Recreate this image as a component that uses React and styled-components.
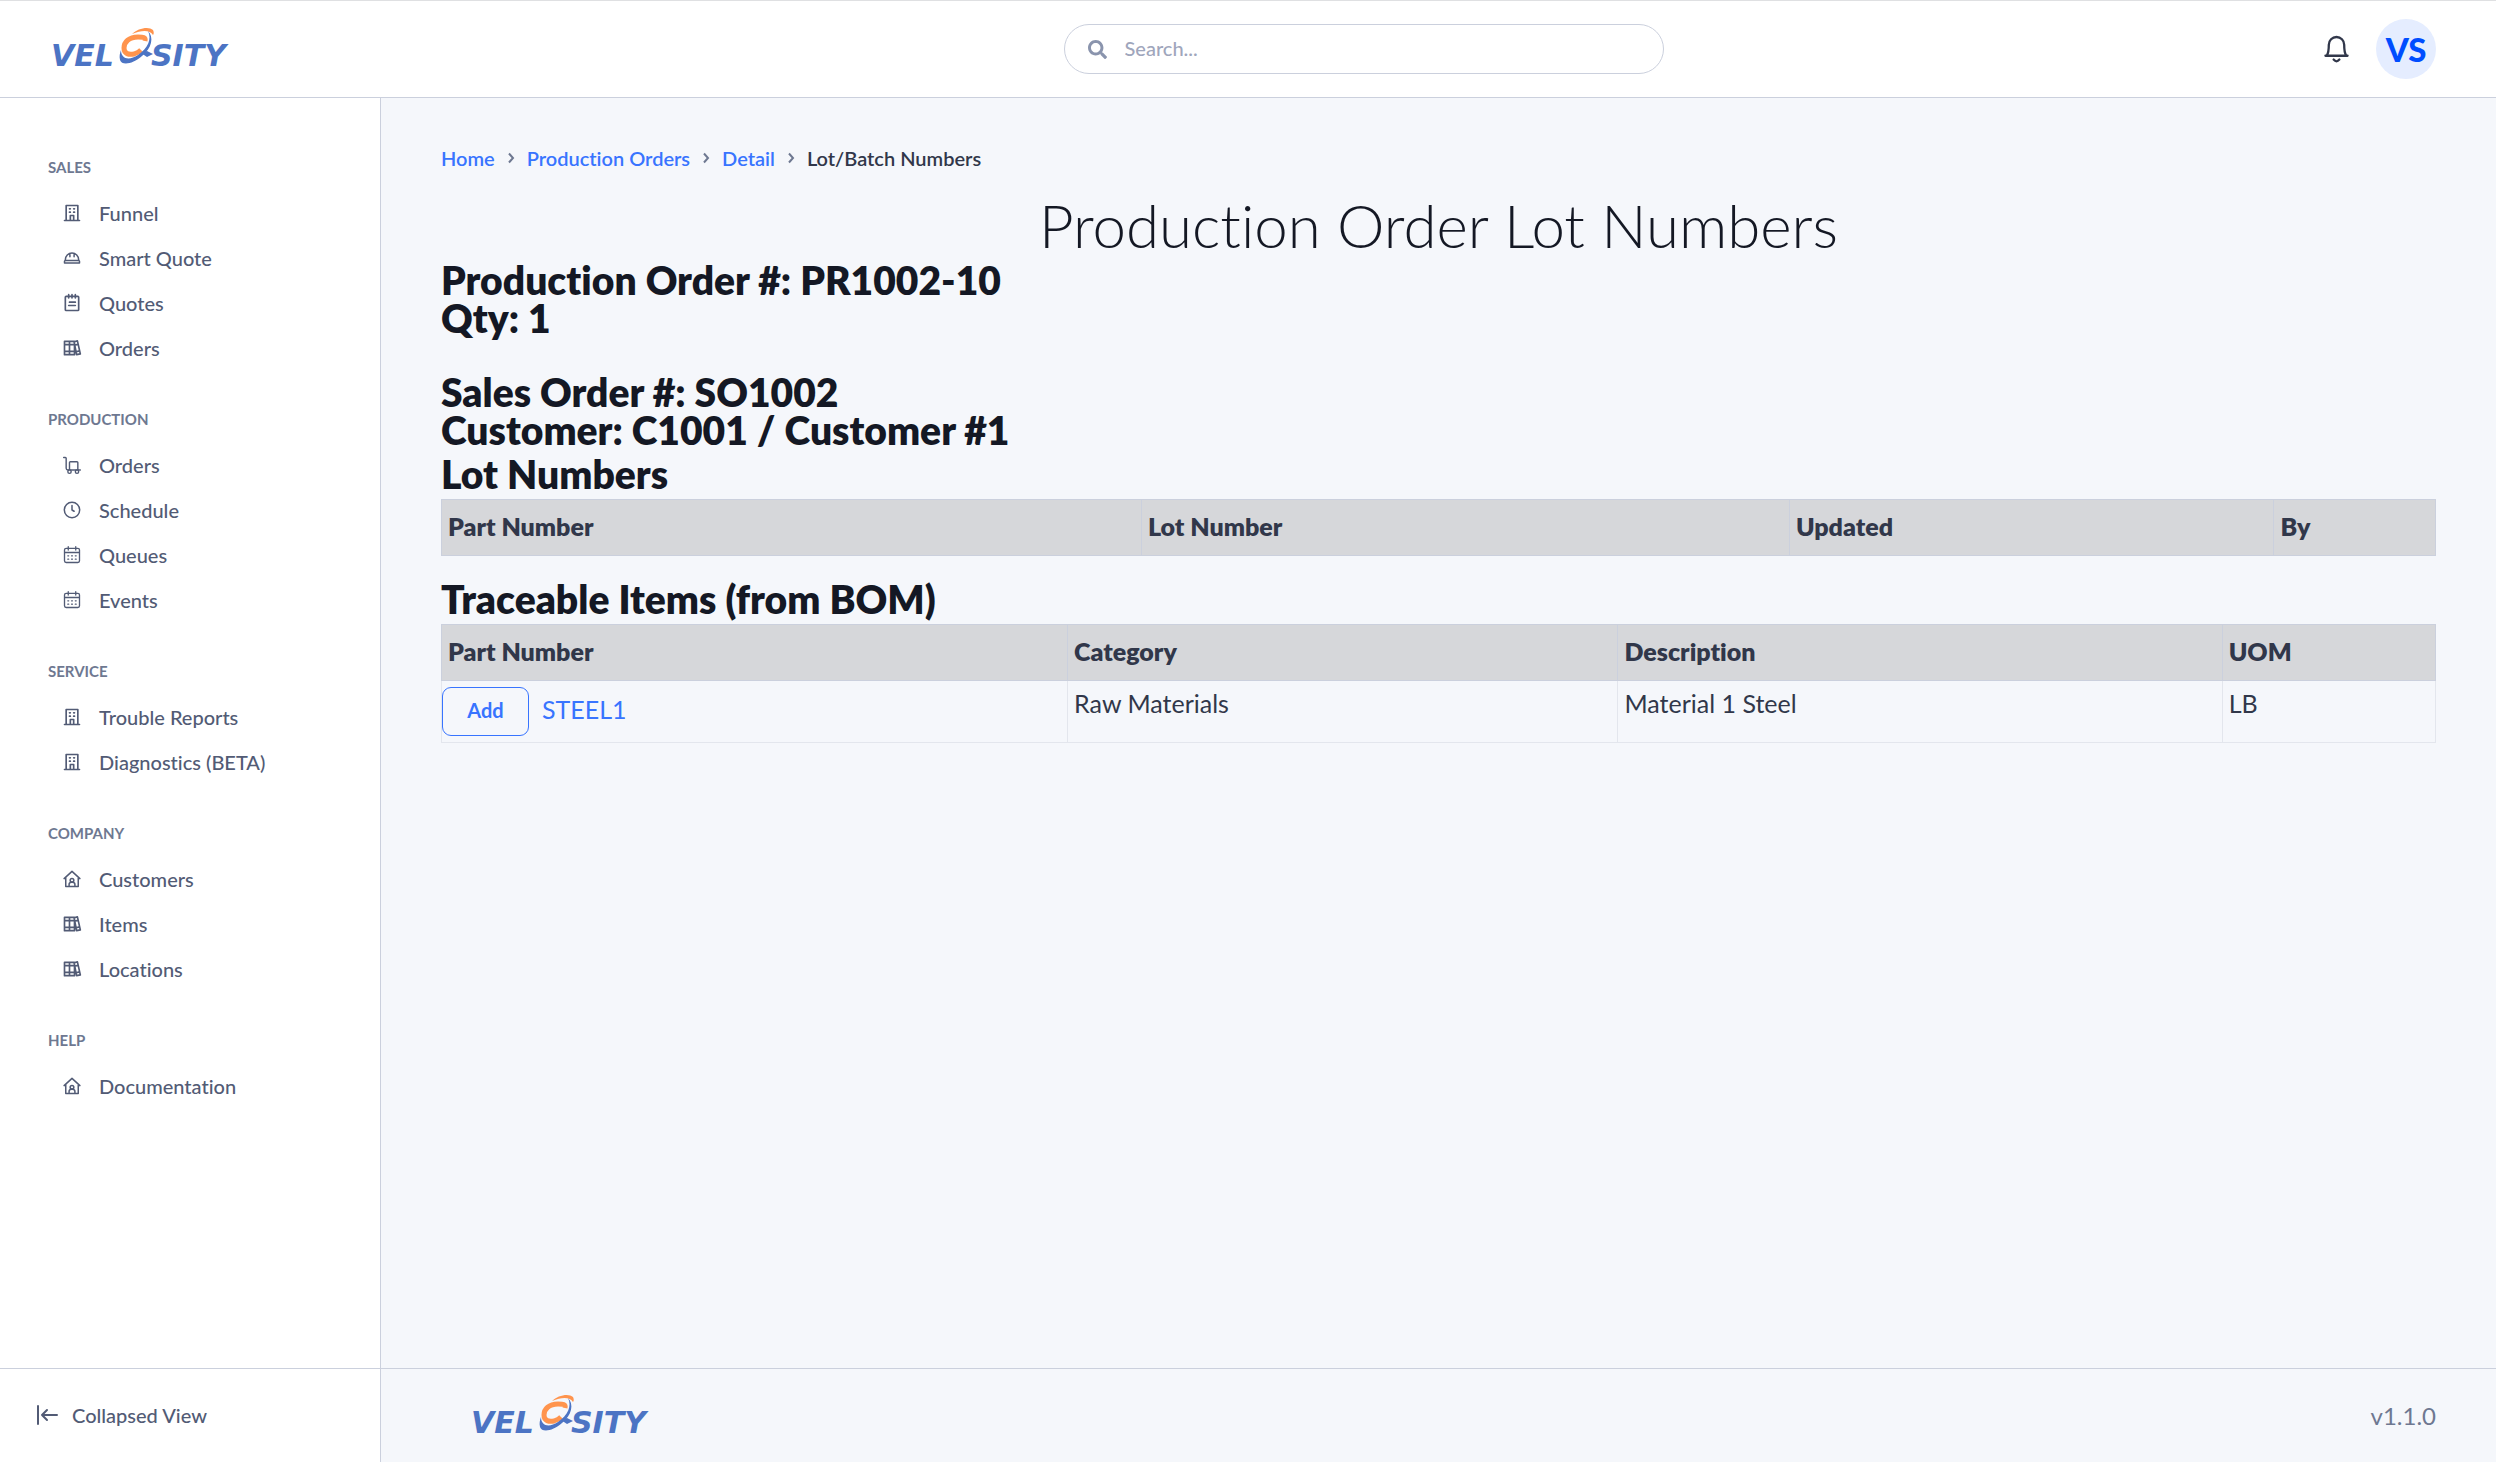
import { useState } from "react";
import styled, { createGlobalStyle } from "styled-components";
import { FaSearch } from "react-icons/fa";

const icons = {
  building: (
    <path
      fill="currentColor"
      stroke="none"
      d="M14,8h1a1,1,0,0,0,0-2H14a1,1,0,0,0,0,2Zm0,4h1a1,1,0,0,0,0-2H14a1,1,0,0,0,0,2ZM9,8h1a1,1,0,0,0,0-2H9A1,1,0,0,0,9,8Zm0,4h1a1,1,0,0,0,0-2H9a1,1,0,0,0,0,2Zm12,8H20V3a1,1,0,0,0-1-1H5A1,1,0,0,0,4,3V20H3a1,1,0,0,0,0,2H21a1,1,0,0,0,0-2Zm-8,0H11V16h2Zm5,0H15V15a1,1,0,0,0-1-1H10a1,1,0,0,0-1,1v5H6V4H18Z"
    />
  ),
  hardHat: (
    <path
      strokeWidth="1.800"
      d="M4 15v-1a8 8 0 0 1 16 0v1M9.500 6.500v4M14.500 6.500v4M4 15h16q1 0 1 1v2H3v-2q0-1 1-1z"
    />
  ),
  notes: (
    <path d="M5 4h14a1 1 0 0 1 1 1v15a1 1 0 0 1-1 1H5a1 1 0 0 1-1-1V5a1 1 0 0 1 1-1zM8 2v4M12 2v4M16 2v4M9 11h7M8 15h8" />
  ),
  books: (
    <path d="M3 4h12v16H3zM9 4v16M3 8h12M3 16h12M14.500 4.500l4-1 3.500 15.500-4.500 1zM15.500 8.500l4-1M17 16.500l4-1" />
  ),
  cart: (
    <g strokeWidth="1.700">
      <path d="M2 3h2a1 1 0 0 1 1 1v12a2 2 0 0 0 2 2h15M10 8h8a1 1 0 0 1 1 1v9H9V9a1 1 0 0 1 1-1z" />
      <circle cx="9" cy="20" r="2" fill="#fff" />
      <circle cx="18" cy="20" r="2" fill="#fff" />
    </g>
  ),
  clock: (
    <g strokeWidth="1.800">
      <circle cx="12" cy="12" r="9.200" />
      <path d="M12 6.500V12l2.500 1.500" />
    </g>
  ),
  calendar: (
    <path
      strokeWidth="1.600"
      d="M5 4h14a2 2 0 0 1 2 2v13a2 2 0 0 1-2 2H5a2 2 0 0 1-2-2V6a2 2 0 0 1 2-2zM3 9h18M7.500 2v4M16.500 2v4M7 13h1M11.500 13h1M16 13h1M7 17h1M11.500 17h1M16 17h1"
    />
  ),
  house: (
    <g strokeWidth="1.800">
      <path d="M2.500 11.500L12 2.800l9.500 8.700M4.500 10v11h15V10M8.500 21v-2.500q0-2.500 3.500-2.500t3.500 2.500V21" />
      <circle cx="12" cy="13.500" r="2.200" />
    </g>
  ),
};

const menu = [
  {
    title: "Sales",
    items: [
      { label: "Funnel", icon: "building" },
      { label: "Smart Quote", icon: "hardHat" },
      { label: "Quotes", icon: "notes" },
      { label: "Orders", icon: "books" },
    ],
  },
  {
    title: "Production",
    items: [
      { label: "Orders", icon: "cart" },
      { label: "Schedule", icon: "clock" },
      { label: "Queues", icon: "calendar" },
      { label: "Events", icon: "calendar" },
    ],
  },
  {
    title: "Service",
    items: [
      { label: "Trouble Reports", icon: "building" },
      { label: "Diagnostics (BETA)", icon: "building" },
    ],
  },
  {
    title: "Company",
    items: [
      { label: "Customers", icon: "house" },
      { label: "Items", icon: "books" },
      { label: "Locations", icon: "books" },
    ],
  },
  {
    title: "Help",
    items: [{ label: "Documentation", icon: "house" }],
  },
];

const lotColumns = [
  { name: "Part Number", width: "35.1%" },
  { name: "Lot Number", width: "32.5%" },
  { name: "Updated", width: "24.3%" },
  { name: "By", width: "8.1%" },
];

const itemColumns = [
  { name: "Part Number", width: "31.4%" },
  { name: "Category", width: "27.6%" },
  { name: "Description", width: "30.3%" },
  { name: "UOM", width: "10.7%" },
];

const traceableItems = [
  {
    partNumber: "STEEL1",
    category: "Raw Materials",
    description: "Material 1 Steel",
    uom: "LB",
  },
];

function MenuIcon({ name }) {
  return (
    <StyledIcon viewBox="0 0 24 24" aria-hidden="true">
      {icons[name]}
    </StyledIcon>
  );
}

function Logo() {
  return (
    <StyledLogo viewBox="0 0 190 48" role="img" aria-label="Velosity">
      <text x="3" y="41">
        VEL
      </text>
      <text x="103" y="41">
        SITY
      </text>
      <path
        d="M97 16C98 12 95 12 90 12C81 12 76 17 76 23c0 6 5 7 10 6c3-1 5-2 7-4"
        fill="none"
        stroke="#ff944d"
        strokeWidth="5"
      />
      <path
        d="M84 9C90 3 101 1 105 5c1 2 1 4 0 5C102 5 94 5 84 9z"
        fill="#ff944d"
      />
      <path
        d="M100 6c6 6 4 17-6 25C85 39 74 41 72 35c-1-4 0-7 1-10c0 9 8 11 17 5c10-7 14-16 10-24z"
        fill="#4c74c4"
      />
      <path d="M93 28l6-2 6 3-6 3z" fill="#4c74c4" />
    </StyledLogo>
  );
}

function Breadcrumb() {
  return (
    <StyledBreadcrumb aria-label="breadcrumb">
      <a href="#home">Home</a>
      <Chevron />
      <a href="#orders">Production Orders</a>
      <Chevron />
      <a href="#detail">Detail</a>
      <Chevron />
      <span>Lot/Batch Numbers</span>
    </StyledBreadcrumb>
  );
}

function Chevron() {
  return (
    <StyledChevron viewBox="0 0 8 12" aria-hidden="true">
      <path d="M2 1.500L6 6l-4 4.500" />
    </StyledChevron>
  );
}

function DataTable({ columns, children }) {
  return (
    <StyledTable>
      <colgroup>
        {columns.map((column) => (
          <col key={column.name} style={{ width: column.width }} />
        ))}
      </colgroup>
      <thead>
        <tr>
          {columns.map((column) => (
            <th key={column.name} scope="col">
              {column.name}
            </th>
          ))}
        </tr>
      </thead>
      {children && <tbody>{children}</tbody>}
    </StyledTable>
  );
}

function App() {
  const [search, setSearch] = useState("");

  return (
    <Page>
      <GlobalStyle />
      <Header>
        <Brand href="#home">
          <Logo />
        </Brand>
        <SearchBox>
          <FaSearch />
          <input
            type="search"
            aria-label="Search"
            placeholder="Search..."
            value={search}
            onChange={(e) => setSearch(e.target.value)}
          />
        </SearchBox>
        <UserArea>
          <BellButton type="button" aria-label="Notifications">
            <svg viewBox="0 0 26 30" aria-hidden="true">
              <path d="M1.500 21.500h23M3 21c2-3 2-6 2-11a8 8 0 0 1 16 0c0 5 0 8 2 11M10 25.500q3 3.500 6 0" />
            </svg>
          </BellButton>
          <Avatar type="button">VS</Avatar>
        </UserArea>
      </Header>
      <Body>
        <Sidebar>
          <nav>
            {menu.map((section) => (
              <MenuSection key={section.title}>
                <MenuTitle>{section.title}</MenuTitle>
                {section.items.map((item) => (
                  <MenuLink key={item.label} href="#menu">
                    <MenuIcon name={item.icon} />
                    {item.label}
                  </MenuLink>
                ))}
              </MenuSection>
            ))}
          </nav>
          <CollapseButton type="button">
            <svg viewBox="0 0 22 20" aria-hidden="true">
              <path d="M2 1v18M21 10H6M11 5l-5 5 5 5" />
            </svg>
            Collapsed View
          </CollapseButton>
        </Sidebar>
        <Content>
          <Main>
            <Breadcrumb />
            <PageTitle>Production Order Lot Numbers</PageTitle>
            <Summary>
              <SubTitle>
                Production Order #: PR1002-10
                <br />
                Qty: 1
              </SubTitle>
              <SubTitle>
                Sales Order #: SO1002
                <br />
                Customer: C1001 / Customer #1
              </SubTitle>
            </Summary>
            <SubTitle>Lot Numbers</SubTitle>
            <DataTable columns={lotColumns} />
            <SubTitle>Traceable Items (from BOM)</SubTitle>
            <DataTable columns={itemColumns}>
              {traceableItems.map((item) => (
                <tr key={item.partNumber}>
                  <td>
                    <PartCell>
                      <AddButton type="button">Add</AddButton>
                      <a href="#part">{item.partNumber}</a>
                    </PartCell>
                  </td>
                  <td>{item.category}</td>
                  <td>{item.description}</td>
                  <td>{item.uom}</td>
                </tr>
              ))}
            </DataTable>
          </Main>
          <Footer>
            <Logo />
            <span>v1.1.0</span>
          </Footer>
        </Content>
      </Body>
    </Page>
  );
}

const GlobalStyle = createGlobalStyle`
  * {
    box-sizing: border-box;
  }
  body {
    margin: 0;
    background: #f5f7fb;
    color: #31374a;
    font-family: Lato, "Open Sans", sans-serif;
    font-size: 25px;
    font-variant-ligatures: none;
  }
  button,
  input {
    font-family: inherit;
  }
  a {
    color: #3874ff;
    text-decoration: none;
  }
  h1,
  h2,
  h3 {
    margin: 0;
  }
`;

const Page = styled.div`
  display: flex;
  flex-direction: column;
  min-height: 100vh;
`;

const Header = styled.header`
  display: flex;
  align-items: center;
  justify-content: space-between;
  height: 98px;
  padding: 0 60px 0 48px;
  background: #fff;
  border-top: 1px solid #dfe0e2;
  border-bottom: 1px solid #cbd0dd;
`;

const Brand = styled.a`
  display: flex;
  min-width: 355px;
`;

const StyledLogo = styled.svg`
  width: 190px;
  height: 48px;
  overflow: visible;
  text {
    font-family: "DejaVu Sans", sans-serif;
    font-size: 30px;
    font-style: italic;
    font-weight: 700;
    fill: #4c74c4;
  }
`;

const SearchBox = styled.label`
  display: flex;
  align-items: center;
  gap: 18px;
  width: 100%;
  max-width: 600px;
  height: 50px;
  padding: 0 23px;
  border: 1px solid #cbd0dd;
  border-radius: 25px;
  color: #8a94ad;
  svg {
    flex: none;
    width: 19px;
    height: 19px;
  }
  input {
    flex: 1;
    padding: 0 0 2px;
    border: 0;
    outline: 0;
    background: transparent;
    color: #31374a;
    font-size: 20px;
    font-weight: 500;
  }
  input::placeholder {
    color: #9fa6bc;
    opacity: 1;
  }
`;

const UserArea = styled.div`
  display: flex;
  align-items: center;
  gap: 27px;
`;

const BellButton = styled.button`
  display: flex;
  padding: 0;
  border: 0;
  background: none;
  color: #31374a;
  svg {
    width: 25px;
    height: 29px;
    fill: none;
    stroke: currentColor;
    stroke-width: 2.4;
    stroke-linecap: round;
  }
`;

const Avatar = styled.button`
  width: 60px;
  height: 60px;
  padding: 0;
  border: 0;
  border-radius: 50%;
  background: #e5edff;
  color: #004dff;
  font-size: 33px;
  font-weight: 900;
`;

const Body = styled.div`
  display: flex;
  flex: 1;
`;

const Sidebar = styled.aside`
  display: flex;
  flex-direction: column;
  flex: none;
  width: 381px;
  background: #fff;
  border-right: 1px solid #cbd0dd;
  nav {
    flex: 1;
    padding: 57px 48px 0;
  }
`;

const MenuSection = styled.section`
  margin-bottom: 37px;
`;

const MenuTitle = styled.h2`
  margin-bottom: 10px;
  color: #6e7891;
  font-size: 15px;
  font-weight: 700;
  line-height: 25px;
  text-transform: uppercase;
`;

const MenuLink = styled.a`
  display: flex;
  align-items: center;
  gap: 17px;
  height: 45px;
  padding-left: 14px;
  color: #525b75;
  font-size: 20px;
  font-weight: 500;
  white-space: nowrap;
`;

const StyledIcon = styled.svg`
  width: 20px;
  height: 20px;
  fill: none;
  stroke: currentColor;
  stroke-width: 2;
  stroke-linejoin: round;
  stroke-linecap: round;
`;

const CollapseButton = styled.button`
  display: flex;
  align-items: center;
  gap: 14px;
  height: 94px;
  padding: 0 36px 2px;
  border: 0;
  border-top: 1px solid #cbd0dd;
  background: none;
  color: #525b75;
  font-size: 20px;
  font-weight: 500;
  svg {
    width: 22px;
    height: 20px;
    fill: none;
    stroke: currentColor;
    stroke-width: 2;
    stroke-linecap: round;
    stroke-linejoin: round;
  }
`;

const Content = styled.div`
  display: flex;
  flex-direction: column;
  flex: 1;
  min-width: 0;
`;

const Main = styled.main`
  flex: 1;
  padding: 45px 60px;
`;

const StyledBreadcrumb = styled.nav`
  display: flex;
  align-items: center;
  gap: 12px;
  height: 30px;
  font-size: 20px;
  font-weight: 600;
`;

const StyledChevron = styled.svg`
  width: 8px;
  height: 12px;
  fill: none;
  stroke: #6e7891;
  stroke-width: 2;
`;

const PageTitle = styled.h1`
  margin-top: 16px;
  color: #141824;
  font-size: 60px;
  font-weight: 300;
  line-height: 72px;
  text-align: center;
`;

const SubTitle = styled.h3`
  margin-bottom: 6px;
  color: #141824;
  font-size: 39px;
  font-weight: 800;
  line-height: 38px;
`;

const Summary = styled.div`
  ${SubTitle} + ${SubTitle} {
    margin-top: 36px;
  }
`;

const StyledTable = styled.table`
  width: 100%;
  margin-bottom: 24px;
  border-collapse: collapse;
  table-layout: fixed;
  th,
  td {
    padding: 6px;
    border: 1px solid #e3e6ed;
    line-height: 33px;
    text-align: left;
    vertical-align: top;
  }
  th {
    padding: 10px 6px 12px;
    border-color: #cbd0dd;
    background: #d6d7da;
    font-weight: 800;
  }
  td:first-child {
    padding: 6px 6px 6px 0;
  }
`;

const PartCell = styled.div`
  display: flex;
  align-items: center;
  gap: 13px;
  a {
    margin-bottom: 4px;
  }
`;

const AddButton = styled.button`
  width: 87px;
  height: 49px;
  padding: 0 0 3px;
  border: 1px solid #3874ff;
  border-radius: 9px;
  background: none;
  color: #3874ff;
  font-size: 20px;
  font-weight: 700;
`;

const Footer = styled.footer`
  display: flex;
  align-items: center;
  justify-content: space-between;
  height: 94px;
  padding: 0 60px 0 87px;
  border-top: 1px solid #cbd0dd;
  color: #6e7891;
  font-size: 24px;
`;

export default App;
